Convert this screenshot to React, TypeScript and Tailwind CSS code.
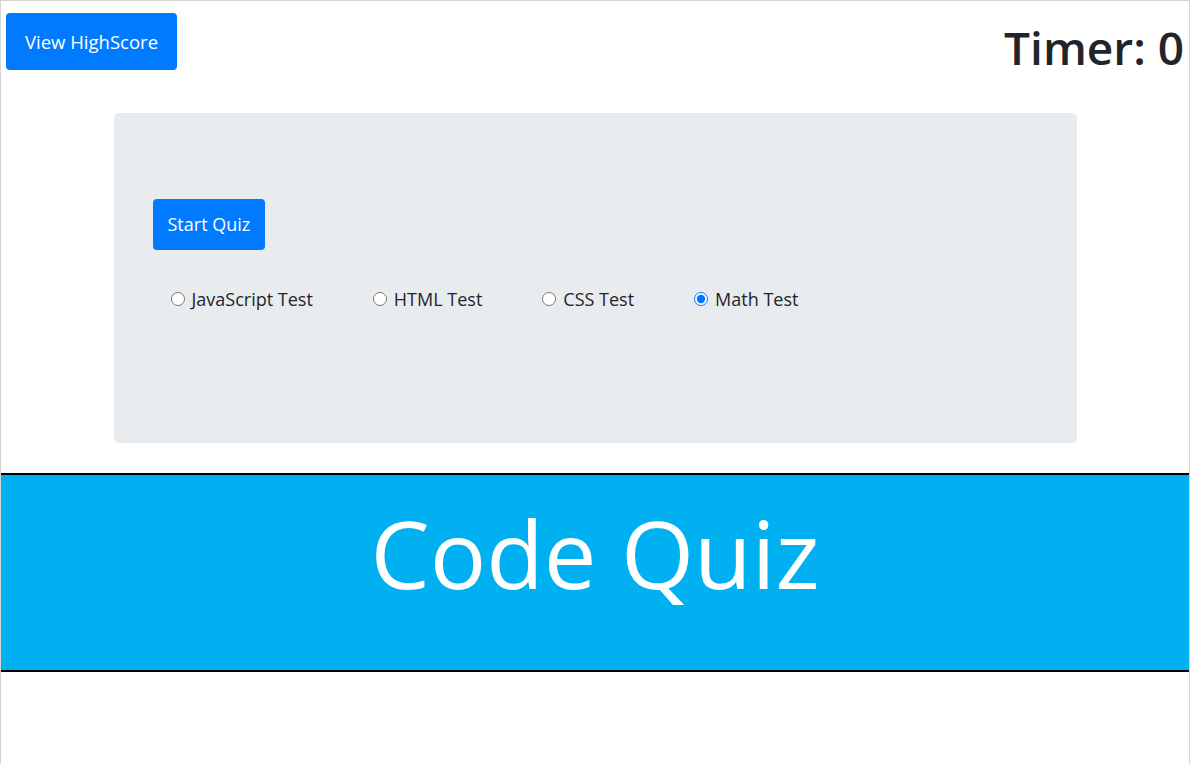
import { useState } from "react";

const tests = ["JavaScript Test", "HTML Test", "CSS Test", "Math Test"];

export default function App() {
  const [picked, setPicked] = useState("Math Test");

  return (
    <div
      className="min-h-[764px] border border-b-0 border-[#d4d4d4] bg-white text-[#212529]"
      style={{ fontFamily: '"Open Sans", "Noto Sans", sans-serif' }}
    >
      {/* Header */}
      <div className="flex items-start justify-between pl-[5px] pr-[5px] pt-[12px]">
        <button className="h-[57px] rounded-[4px] bg-[#007bff] px-[19px] text-[18.5px] text-white">
          View HighScore
        </button>
        <h2 className="mt-[6px] text-[46px] font-semibold leading-[56px]">Timer: 0</h2>
      </div>

      {/* Quiz box */}
      <div className="mx-auto mt-[38px] h-[330px] w-[963px] rounded-[5px] bg-[#e9ecef] pl-[39px] pt-[86px]">
        <button className="h-[51px] rounded-[4px] bg-[#007bff] px-[15px] text-[18px] text-white">
          Start Quiz
        </button>
        <div className="mt-[37px] flex items-center pl-[18px] text-[18px] leading-[24px]">
          {tests.map((t) => (
            <label key={t} className="mr-[60px] flex items-center gap-[7px]">
              <input
                type="radio"
                name="test"
                checked={picked === t}
                onChange={() => setPicked(t)}
                className="m-0 h-[14px] w-[14px]"
              />
              <span>{t}</span>
            </label>
          ))}
        </div>
      </div>

      {/* Banner */}
      <div className="mt-[30px] flex h-[199px] items-center justify-center border-y-2 border-black bg-[#00b0f0] pb-[40px]">
        <h1 className="text-[94px] leading-none text-white">Code Quiz</h1>
      </div>
    </div>
  );
}
